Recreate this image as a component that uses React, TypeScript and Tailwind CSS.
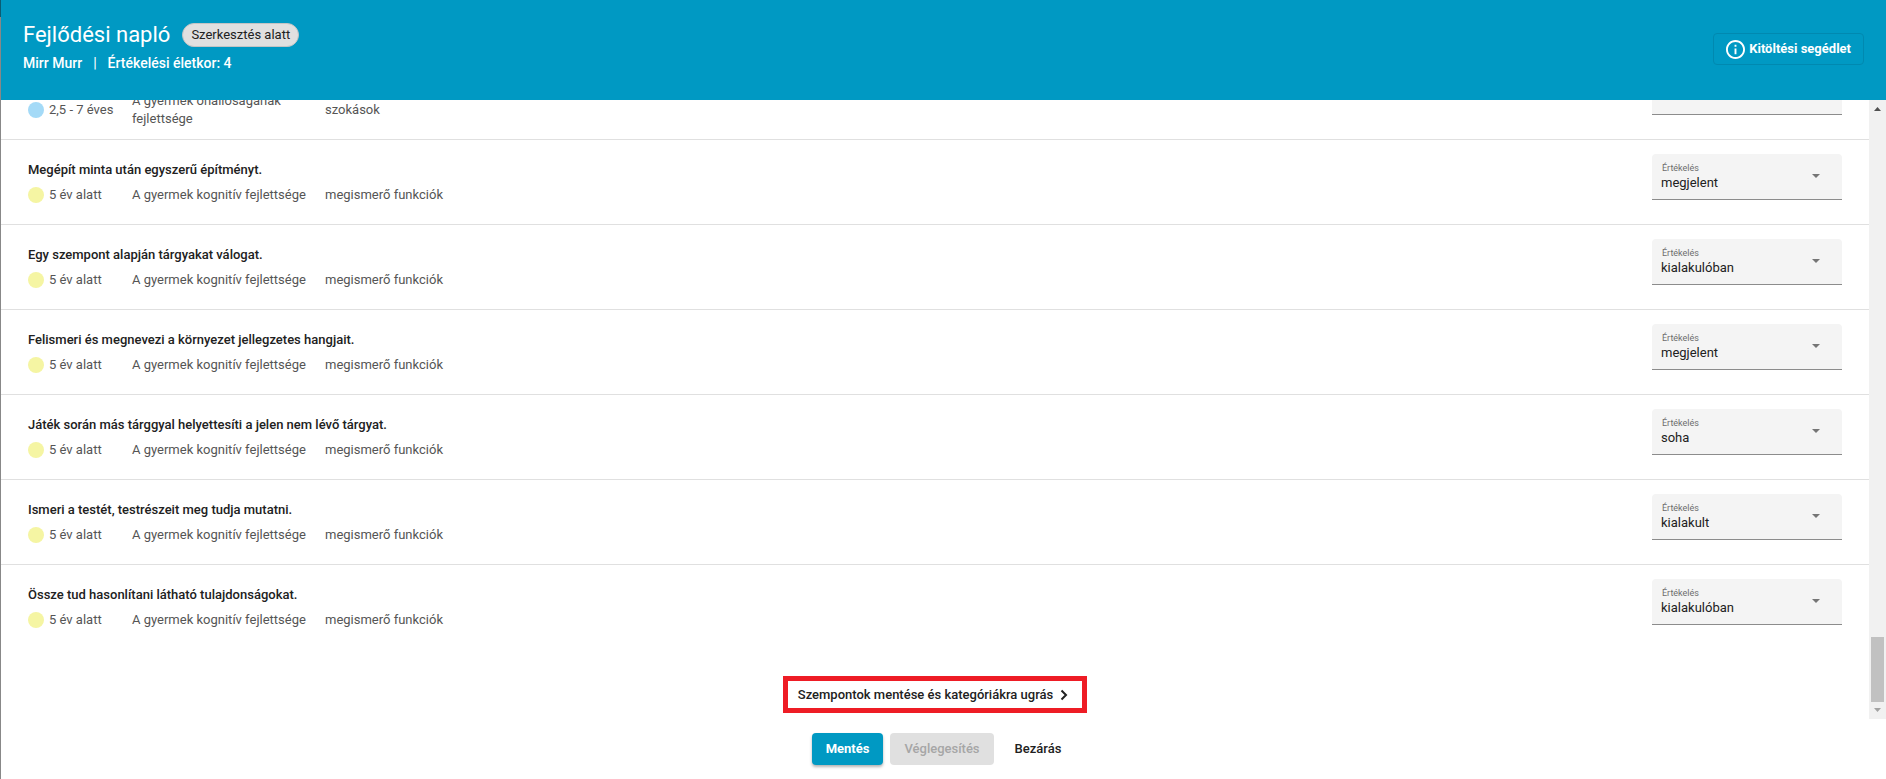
import { useId } from 'react';

type Criterion = {
  title?: string;
  age: string;
  dot: string;
  area: string;
  category: string;
  value: string;
};

const YELLOW = 'bg-[#f5f5a3]';
const BLUE = 'bg-[#a4daf7]';
const OPTIONS = ['', 'soha', 'megjelent', 'kialakulóban', 'kialakult'];

const cognitive = (title: string, value: string): Criterion => ({
  title,
  value,
  age: '5 év alatt',
  dot: YELLOW,
  area: 'A gyermek kognitív fejlettsége',
  category: 'megismerő funkciók',
});

const criteria: Criterion[] = [
  {
    age: '2,5 - 7 éves',
    dot: BLUE,
    area: 'A gyermek önállóságának fejlettsége',
    category: 'szokások',
    value: '',
  },
  cognitive('Megépít minta után egyszerű építményt.', 'megjelent'),
  cognitive('Egy szempont alapján tárgyakat válogat.', 'kialakulóban'),
  cognitive('Felismeri és megnevezi a környezet jellegzetes hangjait.', 'megjelent'),
  cognitive('Játék során más tárggyal helyettesíti a jelen nem lévő tárgyat.', 'soha'),
  cognitive('Ismeri a testét, testrészeit meg tudja mutatni.', 'kialakult'),
  cognitive('Össze tud hasonlítani látható tulajdonságokat.', 'kialakulóban'),
];

const RatingField = ({ value }: { value: string }) => {
  const id = useId();
  return (
    <div className="relative mt-[14px] h-[46px] w-[190px] shrink-0 self-start rounded-t border-b border-[#8c8c8c] bg-[#f4f4f4]">
      {value && (
        <label htmlFor={id} className="absolute left-[10px] top-2 text-[9px] leading-3 text-[#6d6d6d]">
          Értékelés
        </label>
      )}
      <select
        id={id}
        aria-label="Értékelés"
        defaultValue={value}
        className="h-full w-full appearance-none bg-transparent pb-[7px] pl-[9px] pr-10 pt-[19px] text-[13px] leading-[18px] text-[#212121] outline-none"
      >
        {OPTIONS.map((o) => (
          <option key={o} value={o}>
            {o}
          </option>
        ))}
      </select>
      <svg viewBox="0 0 8 4" className="pointer-events-none absolute right-[22px] top-5 h-1 w-2 fill-[#757575]">
        <path d="M0 0h8L4 4z" />
      </svg>
    </div>
  );
};

const CriterionRow = ({ item }: { item: Criterion }) => (
  <li className="box-content flex min-h-[84px] shrink-0 items-center justify-between border-b border-[#e0e0e0] px-[27px] last:border-b-0">
    <div className="flex flex-col gap-[7px]">
      <h2 className="min-h-[18px] text-[13px] font-medium leading-[18px] text-[#212121]">{item.title}</h2>
      <div className="flex items-center text-[13px] leading-[18px] text-[#555]">
        <div className="flex w-[104px] items-center gap-[5px]">
          <span className={`size-4 rounded-full ${item.dot}`} />
          {item.age}
        </div>
        <p className="w-[193px] pr-2">{item.area}</p>
        <p>{item.category}</p>
      </div>
    </div>
    <RatingField value={item.value} />
  </li>
);

const Scrollbar = () => (
  <div aria-hidden="true" className="flex w-[17px] shrink-0 flex-col items-center justify-between bg-[#f1f1f1]">
    <svg viewBox="0 0 17 17" className="size-[17px] fill-[#505050]">
      <path d="M5 11h7L8.500 7z" />
    </svg>
    <div className="flex flex-col items-center">
      <div className="h-[65px] w-[13px] bg-[#c1c1c1]" />
      <svg viewBox="0 0 17 17" className="size-[17px] fill-[#a3a3a3]">
        <path d="M5 6h7l-3.500 4z" />
      </svg>
    </div>
  </div>
);

const Header = () => (
  <header className="flex h-[100px] shrink-0 items-start justify-between bg-[#0099c3] px-[22px] text-white">
    <div className="pt-[21px]">
      <div className="flex items-center gap-3">
        <h1 className="text-[22px] leading-7">Fejlődési napló</h1>
        <span className="rounded-full border border-[#c4c4c4] bg-[#e0e0e0] px-2 text-[13px] leading-[22px] text-[#212121]">
          Szerkesztés alatt
        </span>
      </div>
      <p className="flex gap-[11px] pt-1 text-[14px] font-medium leading-5">
        <span>Mirr Murr</span>
        <span>|</span>
        <span>Értékelési életkor: 4</span>
      </p>
    </div>
    <button
      type="button"
      className="mt-[33px] flex h-8 items-center gap-1 rounded border border-[#0089b0] px-3 text-[13px] font-bold"
    >
      <svg viewBox="2 2 20 20" className="size-[19px] fill-current">
        <path d="M11 7h2v2h-2zm0 4h2v6h-2zm1-9C6.480 2 2 6.480 2 12s4.480 10 10 10 10-4.480 10-10S17.520 2 12 2m0 18c-4.410 0-8-3.590-8-8s3.590-8 8-8 8 3.590 8 8-3.590 8-8 8" />
      </svg>
      Kitöltési segédlet
    </button>
  </header>
);

export default function App() {
  return (
    <div className="flex h-screen flex-col overflow-hidden border-l border-[#888] bg-white font-['Roboto',sans-serif]">
      <div className="absolute left-0 top-0 h-[17px] w-px bg-[#0b5c73]" />
      <Header />
      <div className="flex min-h-0 flex-1">
        <main className="flex flex-1 flex-col justify-end overflow-hidden">
          <ul className="flex flex-col">
            {criteria.map((item, i) => (
              <CriterionRow key={i} item={item} />
            ))}
          </ul>
          <div className="flex justify-center pb-[6px] pt-[27px]">
            <button
              type="button"
              className="flex h-[37px] items-center gap-[7px] border-[5px] border-[#ee1c25] px-[10px] text-[13px] font-medium text-[#212121]"
            >
              Szempontok mentése és kategóriákra ugrás
              <svg viewBox="0 0 8 12" className="mr-1 h-3 w-2 fill-none stroke-current stroke-2">
                <path d="M1.500 1.500 6 6l-4.500 4.500" />
              </svg>
            </button>
          </div>
        </main>
        <Scrollbar />
      </div>
      <footer className="flex h-[60px] shrink-0 items-start justify-center gap-[7px] pt-[14px] text-[13px]">
        <button type="button" className="h-8 rounded bg-[#0099c3] px-[14px] font-bold text-white shadow-[0_2px_3px_rgba(0,0,0,0.3)]">
          Mentés
        </button>
        <button type="button" disabled className="h-8 rounded bg-[#e0e0e0] px-[14px] font-medium text-[#a6a6a6]">
          Véglegesítés
        </button>
        <button type="button" className="h-8 px-[14px] font-medium text-[#212121]">
          Bezárás
        </button>
      </footer>
    </div>
  );
}
